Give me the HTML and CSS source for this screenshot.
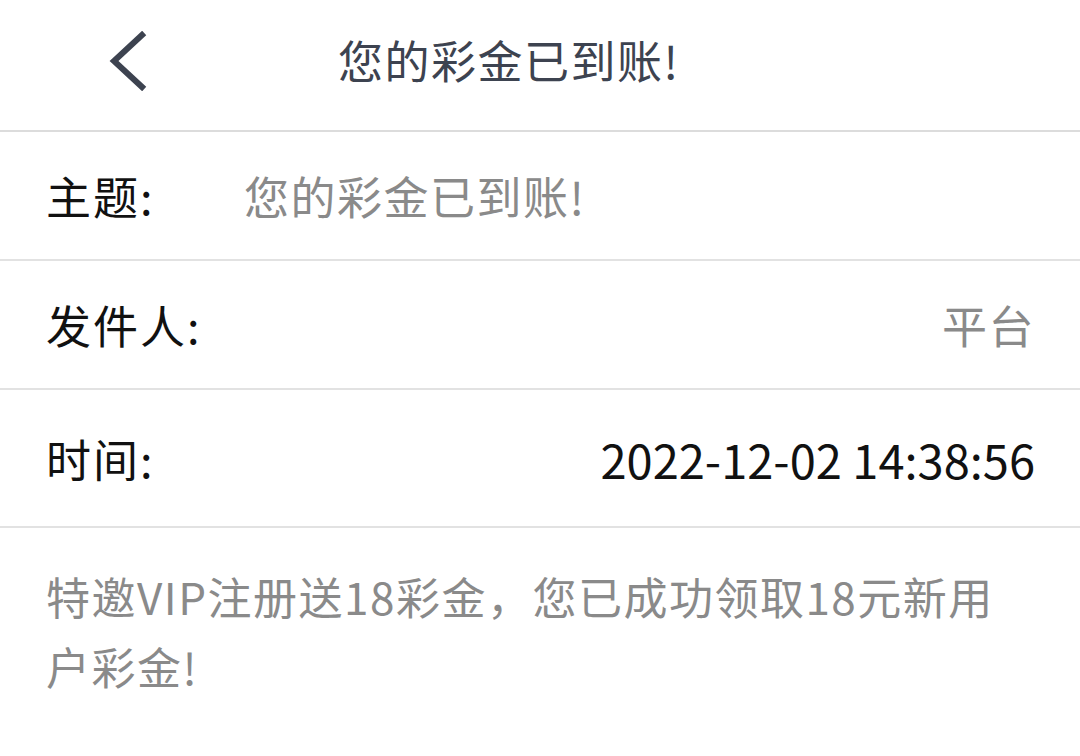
FILE: index.html
```html
<!DOCTYPE html>
<html lang="zh-CN">
<head>
    <meta charset="UTF-8">
    <meta name="viewport" content="width=device-width, initial-scale=1.0">
    <title>您的彩金已到账！</title>
    <link rel="stylesheet" href="styles.css">
</head>
<body>
    <div class="header">
        <svg class="back" width="40" height="60" viewBox="0 0 40 60">
            <polyline points="34,4 6,30 34,56" fill="none" stroke="#3d4350" stroke-width="6" stroke-linecap="square"/>
        </svg>
        <h1 class="title">您的彩金已到账!</h1>
    </div>
    <div class="row">
        <span class="label">主题:</span>
        <span class="value subject">您的彩金已到账!</span>
    </div>
    <div class="row">
        <span class="label">发件人:</span>
        <span class="value right">平台</span>
    </div>
    <div class="row row-time">
        <span class="label">时间:</span>
        <span class="value right date">2022-12-02 14:38:56</span>
    </div>
    <div class="content">特邀VIP注册送18彩金，您已成功领取18元新用户彩金!</div>
</body>
</html>
```

FILE: styles.css
```css
body {
    margin: 0;
    background-color: white;
    font-family: "Noto Sans CJK SC", "Noto Sans", sans-serif;
}
.header {
    display: flex;
    align-items: center;
    height: 130px;
    border-bottom: 2px solid #dcdcdc;
}
.back {
    margin-left: 108px;
    margin-top: -8px;
}
.title {
    margin: -12px 0 0 190px;
    font-size: 45px;
    font-weight: normal;
    letter-spacing: 1.5px;
    color: #3d4350;
}
.row {
    display: flex;
    align-items: center;
    height: 127px;
    padding: 0 45px 0 46px;
    border-bottom: 2px solid #e2e2e2;
}
.row-time {
    height: 136px;
}
.label {
    width: 198px;
    font-size: 45px;
    letter-spacing: 2px;
    color: #111;
}
.value {
    font-size: 45px;
    letter-spacing: 1.5px;
    color: #8a8a8a;
}
.right {
    margin-left: auto;
}
.date {
    font-size: 47px;
    letter-spacing: 0;
    color: #111;
}
.content {
    padding: 33px 60px 0 46px;
    font-size: 44px;
    line-height: 70px;
    letter-spacing: 1.5px;
    color: #8a8a8a;
}
```
